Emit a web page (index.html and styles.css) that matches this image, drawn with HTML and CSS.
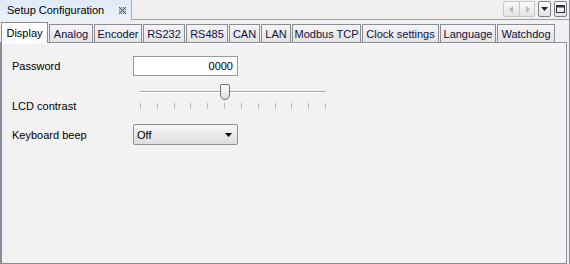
FILE: index.html
```html
<!DOCTYPE html>
<html>
<head>
<meta charset="utf-8">
<link rel="stylesheet" href="styles.css">
</head>
<body>
<div class="view">
  <div class="titlebar">
    <div class="title-tab">
      <span class="title-text">Setup Configuration</span>
      <svg class="close-icon" width="7" height="7" viewBox="0 0 7 7">
        <rect x="0" y="0" width="7" height="7" fill="#c8c8c8"/>
        <rect x="0" y="0" width="1" height="1" fill="#555"/><rect x="2" y="0" width="1" height="1" fill="#888"/><rect x="4" y="0" width="1" height="1" fill="#888"/><rect x="6" y="0" width="1" height="1" fill="#555"/>
        <rect x="1" y="1" width="1" height="1" fill="#555"/><rect x="5" y="1" width="1" height="1" fill="#555"/>
        <rect x="0" y="2" width="1" height="1" fill="#888"/><rect x="2" y="2" width="1" height="1" fill="#555"/><rect x="4" y="2" width="1" height="1" fill="#555"/><rect x="6" y="2" width="1" height="1" fill="#888"/>
        <rect x="3" y="3" width="1" height="1" fill="#444"/>
        <rect x="0" y="4" width="1" height="1" fill="#888"/><rect x="2" y="4" width="1" height="1" fill="#555"/><rect x="4" y="4" width="1" height="1" fill="#555"/><rect x="6" y="4" width="1" height="1" fill="#888"/>
        <rect x="1" y="5" width="1" height="1" fill="#555"/><rect x="5" y="5" width="1" height="1" fill="#555"/>
        <rect x="0" y="6" width="1" height="1" fill="#555"/><rect x="2" y="6" width="1" height="1" fill="#888"/><rect x="4" y="6" width="1" height="1" fill="#888"/><rect x="6" y="6" width="1" height="1" fill="#555"/>
      </svg>
    </div>
    <div class="title-fill">
      <div class="view-buttons">
        <div class="btn-pair">
          <div class="vbtn"><svg width="5" height="7" viewBox="0 0 5 7"><path d="M4 0 L0 3.5 L4 7 Z" fill="#b4b8be"/></svg></div>
          <div class="vbtn"><svg width="5" height="7" viewBox="0 0 5 7"><path d="M1 0 L5 3.5 L1 7 Z" fill="#b4b8be"/></svg></div>
        </div>
        <div class="vbtn single"><svg width="7" height="4" viewBox="0 0 7 4"><path d="M0 0 L7 0 L3.5 4 Z" fill="#222"/></svg></div>
        <div class="vbtn single"><svg width="9" height="8" viewBox="0 0 9 8"><rect x="0.5" y="0.5" width="8" height="7" fill="none" stroke="#333"/><rect x="0.5" y="0.5" width="8" height="2" fill="#333"/></svg></div>
      </div>
    </div>
  </div>
  <div class="tabbar">
    <div class="tab selected w-display">Display</div>
    <div class="tab w-analog">Analog</div>
    <div class="tab w-encoder">Encoder</div>
    <div class="tab w-rs">RS232</div>
    <div class="tab w-rs">RS485</div>
    <div class="tab w-can">CAN</div>
    <div class="tab w-lan">LAN</div>
    <div class="tab w-modbus">Modbus TCP</div>
    <div class="tab w-clock">Clock settings</div>
    <div class="tab w-language">Language</div>
    <div class="tab w-watchdog">Watchdog</div>
  </div>
  <div class="pane">
    <div class="form">
      <div class="row row-password">
        <label class="lbl">Password</label>
        <div class="input">0000</div>
      </div>
      <div class="row row-slider">
        <label class="lbl lbl-slider">LCD contrast</label>
        <div class="slider">
          <div class="track"></div>
          <div class="thumb"></div>
          <div class="ticks">
            <span></span><span></span><span></span><span></span><span></span><span></span>
            <span></span><span></span><span></span><span></span><span></span><span></span>
          </div>
        </div>
      </div>
      <div class="row row-combo">
        <label class="lbl">Keyboard beep</label>
        <div class="combo">
          <span>Off</span>
          <svg width="7" height="4" viewBox="0 0 7 4"><path d="M0 0 L7 0 L3.5 4 Z" fill="#000"/></svg>
        </div>
      </div>
    </div>
  </div>
</div>
</body>
</html>
```
FILE: styles.css
```css
* { box-sizing: border-box; }
html, body { margin: 0; padding: 0; }
body {
  background: #f0f0f0;
  font-family: "Liberation Sans", Arial, sans-serif;
  font-size: 11px;
  color: #000;
}
.view {
  width: 570px;
  height: 264px;
  display: flex;
  flex-direction: column;
  border-right: 1px solid #8c8f96;
}
.titlebar {
  height: 20px;
  display: flex;
  flex: none;
}
.title-tab {
  width: 132px;
  height: 20px;
  background: linear-gradient(#dfeaf6, #eaf2fa);
  border-right: 1px solid #8fb3d4;
  display: flex;
  align-items: center;
  padding-left: 7px;
}
.title-text { flex: 1; }
.close-icon { margin-right: 5px; }
.title-fill {
  flex: 1;
  border-bottom: 1px solid #a0a0a0;
  display: flex;
  justify-content: flex-end;
  align-items: flex-start;
  padding-top: 1px;
  padding-right: 2px;
}
.view-buttons { display: flex; gap: 3px; }
.btn-pair {
  display: flex;
  border: 1px solid #c4c7cc;
  border-radius: 2px;
  background: linear-gradient(#fafafa, #e4e4e4);
}
.btn-pair .vbtn { width: 15px; height: 14px; }
.btn-pair .vbtn + .vbtn { border-left: 1px solid #c4c7cc; }
.vbtn {
  display: flex;
  align-items: center;
  justify-content: center;
}
.vbtn.single {
  width: 13px;
  height: 16px;
  border: 1px solid #7d8087;
  border-radius: 2px;
  background: linear-gradient(#fdfdfd, #e2e2e2);
}
.tabbar {
  height: 22px;
  display: flex;
  align-items: flex-end;
  gap: 1px;
  padding-left: 1px;
  flex: none;
}
.tab {
  flex: none;
  height: 18px;
  border: 1px solid #898c95;
  border-bottom: none;
  background: linear-gradient(#f5f5f5, #e3e3e3);
  display: flex;
  align-items: center;
  justify-content: center;
  white-space: nowrap;
  overflow: hidden;
  color: #101040;
}
.tab.selected {
  height: 21px;
  background: #fff;
  color: #000;
  margin-bottom: -1px;
  position: relative;
}
.w-display { width: 47px; }
.w-analog { width: 44px; }
.w-encoder { width: 48px; }
.w-rs { width: 42px; }
.w-can { width: 31px; }
.w-lan { width: 30px; }
.w-modbus { width: 69px; }
.w-clock { width: 77px; }
.w-language { width: 56px; }
.w-watchdog { width: 58px; }
.pane {
  flex: 1;
  background: #f2f2f2;
  border-top: 1px solid #898c95;
  border-left: 2px solid #8a8d96;
  border-bottom: 1px solid #8a8d96;
  border-right: 1px solid #8a8d96;
  margin-right: 2px;
  box-shadow: inset 0 1px 0 #fff;
}
.form {
  padding: 13px 0 0 10px;
  display: flex;
  flex-direction: column;
}
.row { display: flex; align-items: center; }
.lbl { width: 121px; }
.input {
  width: 105px;
  height: 20px;
  border: 1px solid #9a9a9a;
  background: #fff;
  text-align: right;
  padding: 3px 4px 0 0;
}
.row-slider { margin-top: 8px; align-items: flex-start; height: 28px; }
.lbl-slider { padding-top: 16px; }
.slider {
  position: relative;
  width: 190px;
  height: 28px;
  margin-left: 5px;
}
.track {
  position: absolute;
  left: 2px; right: 2px; top: 7px;
  height: 2px;
  border-top: 1px solid #a8a8a8;
  border-bottom: 1px solid #fff;
}
.thumb {
  position: absolute;
  left: 82px; top: 0;
  width: 10px;
  height: 16px;
  border: 1px solid #70737a;
  border-radius: 2px 2px 5px 5px / 2px 2px 5px 5px;
  background: linear-gradient(#fdfdfd, #dcdcdc);
}
.ticks {
  position: absolute;
  left: 2px; right: 2px; top: 19px;
  display: flex;
  justify-content: space-between;
}
.ticks span { width: 1px; height: 6px; background: #bdbdbd; }
.row-combo { margin-top: 12px; }
.combo {
  width: 105px;
  height: 21px;
  border: 1px solid #8e8f94;
  border-radius: 2px;
  background: linear-gradient(#f6f6f6, #dedede);
  display: flex;
  align-items: center;
  justify-content: space-between;
  padding: 0 5px 0 3px;
}
```
